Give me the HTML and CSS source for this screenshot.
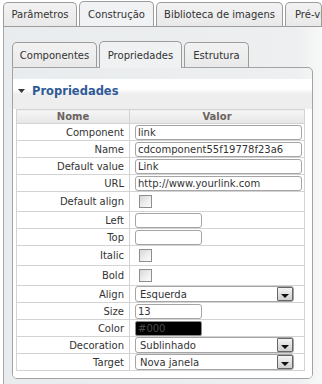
FILE: index.html
```html
<!DOCTYPE html>
<html lang="pt">
<head>
<meta charset="utf-8">
<title>Propriedades</title>
<link rel="stylesheet" href="styles.css">
</head>
<body>
<div class="outer-tabs">
  <div class="tab w-param">Parâmetros</div>
  <div class="tab active w-constr">Construção</div>
  <div class="tab w-biblio">Biblioteca de imagens</div>
  <div class="tab w-pre">Pré-visualização</div>
</div>
<div class="outer-panel">
  <div class="inner-tabs">
    <div class="tab itab w-comp">Componentes</div>
    <div class="tab itab active w-prop">Propriedades</div>
    <div class="tab itab w-estr">Estrutura</div>
  </div>
  <div class="inner-panel">
    <div class="box">
      <div class="box-head">
        <svg class="caret" width="7" height="4" viewBox="0 0 7 4"><polygon points="0,0 7,0 3.5,4" fill="#3a3a3a"/></svg>
        <span class="box-title">Propriedades</span>
      </div>
      <table class="props">
        <colgroup><col class="c1"><col class="c2"></colgroup>
        <thead>
          <tr class="hrow"><th>Nome</th><th>Valor</th></tr>
        </thead>
        <tbody>
          <tr class="r"><td class="lbl">Component</td><td class="val"><input class="txt" type="text" value="link"></td></tr>
          <tr class="r"><td class="lbl">Name</td><td class="val"><input class="txt" type="text" value="cdcomponent55f19778f23a6"></td></tr>
          <tr class="r"><td class="lbl">Default value</td><td class="val"><input class="txt" type="text" value="Link"></td></tr>
          <tr class="r"><td class="lbl">URL</td><td class="val"><input class="txt" type="text" value="http://www.yourlink.com"></td></tr>
          <tr class="rc"><td class="lbl">Default align</td><td class="val"><span class="chk"></span></td></tr>
          <tr class="r"><td class="lbl">Left</td><td class="val"><input class="txt short" type="text" value=""></td></tr>
          <tr class="r"><td class="lbl">Top</td><td class="val"><input class="txt short" type="text" value=""></td></tr>
          <tr class="rc"><td class="lbl">Italic</td><td class="val"><span class="chk"></span></td></tr>
          <tr class="rc"><td class="lbl">Bold</td><td class="val"><span class="chk"></span></td></tr>
          <tr class="r"><td class="lbl">Align</td><td class="val"><div class="sel"><span>Esquerda</span><span class="btn"><span class="tri"></span></span></div></td></tr>
          <tr class="r"><td class="lbl">Size</td><td class="val"><input class="txt short" type="text" value="13"></td></tr>
          <tr class="r"><td class="lbl">Color</td><td class="val"><div class="color">#000</div></td></tr>
          <tr class="r"><td class="lbl">Decoration</td><td class="val"><div class="sel"><span>Sublinhado</span><span class="btn"><span class="tri"></span></span></div></td></tr>
          <tr class="r"><td class="lbl">Target</td><td class="val"><div class="sel"><span>Nova janela</span><span class="btn"><span class="tri"></span></span></div></td></tr>
        </tbody>
      </table>
    </div>
  </div>
</div>
</body>
</html>
```
FILE: styles.css
```css
html, body {
  margin: 0;
  padding: 0;
  width: 322px;
  height: 384px;
  overflow: hidden;
  background: #ffffff;
}
body {
  font-family: "DejaVu Sans", Verdana, sans-serif;
  font-size: 10px;
  color: #333333;
}
.outer-tabs {
  display: flex;
  align-items: flex-end;
  gap: 2px;
  height: 26px;
  padding-left: 3px;
  box-sizing: border-box;
  white-space: nowrap;
  overflow: hidden;
}
.tab {
  flex: none;
  height: 24px;
  box-sizing: border-box;
  border: 1px solid #9c9c9c;
  border-bottom: none;
  border-radius: 5px 5px 0 0;
  background: linear-gradient(#f2f2f2, #e9e9e9);
  display: flex;
  align-items: center;
  justify-content: center;
  overflow: hidden;
  color: #333333;
}
.tab.active {
  height: 26px;
  margin-bottom: -1px;
  background: #f1f2f3;
  position: relative;
  z-index: 1;
}
.w-param { width: 74px; }
.w-constr { width: 75px; }
.w-biblio { width: 127px; }
.w-pre { width: 37px; justify-content: flex-start; padding-left: 9px; }

.outer-panel {
  margin-left: 3px;
  border-left: 1px solid #a8a8a8;
  border-top: 1px solid #9c9c9c;
  padding: 14px 0 0 8px;
  height: 358px;
  box-sizing: border-box;
  background: linear-gradient(to right, #e9ecee 0%, #edeff0 92%, #f8f8f8 100%);
}
.inner-tabs {
  display: flex;
  align-items: flex-end;
  gap: 2px;
  height: 26px;
}
.itab { height: 25px; }
.itab.active { height: 27px; background: #eff1f2; }
.w-comp { width: 85px; }
.w-prop { width: 83px; }
.w-estr { width: 65px; }

.inner-panel {
  width: 301px;
  box-sizing: border-box;
  border: 1px solid #a3a3a3;
  border-radius: 0 5px 5px 5px;
  padding-top: 11px;
}
.box {
  background: #ffffff;
  border-radius: 0 0 4px 4px;
  padding-bottom: 7px;
}
.box-head {
  height: 30px;
  box-sizing: border-box;
  padding: 3px 0 0 5px;
  display: flex;
  align-items: flex-start;
  background: linear-gradient(to bottom, #ffffff 0px, #ffffff 10px, #eeeeee 15px, #eeeeee 100%);
}
.caret {
  margin-top: 7px;
  flex: none;
}
.box-title {
  margin-left: 7px;
  font-weight: bold;
  font-size: 11.5px;
  line-height: 18px;
  color: #2f5b97;
}
.props {
  width: 288px;
  margin-left: 3px;
  border-collapse: collapse;
  table-layout: fixed;
  border: 1px solid #d3d3d3;
}
.c1 { width: 113px; }
.c2 { width: 175px; }
.props th, .props td {
  border: 1px solid #d3d3d3;
  padding: 0;
}
.hrow { height: 14px; }
.hrow th {
  font-weight: bold;
  font-size: 10px;
  color: #6a6360;
  background: linear-gradient(#f5f5f5, #e6e6e6);
  line-height: 12px;
  text-align: center;
}
.r { height: 17px; }
.rc { height: 20px; }
.lbl {
  text-align: right;
  padding-right: 5px !important;
  white-space: nowrap;
}
.val {
  padding-left: 5px !important;
  vertical-align: middle;
}
.txt {
  display: block;
  width: 167px;
  height: 15px;
  box-sizing: border-box;
  margin: 0;
  border: 1px solid #a5a5a5;
  border-radius: 3px;
  padding: 0 2px;
  font: inherit;
  color: #333333;
  background: #ffffff;
  outline: none;
}
.txt.short { width: 67px; }
.chk {
  display: block;
  width: 13px;
  height: 13px;
  margin-left: 4px;
  box-sizing: border-box;
  border: 1px solid #8e8e8e;
  background: linear-gradient(135deg, #d6d6d6 0%, #f0f0f0 60%, #fbfbfb 100%);
}
.sel {
  width: 159px;
  height: 16px;
  box-sizing: border-box;
  border: 1px solid #a5a5a5;
  border-radius: 3px;
  display: flex;
  align-items: center;
  justify-content: space-between;
  padding-left: 4px;
  background: #ffffff;
}
.btn {
  flex: none;
  width: 16px;
  height: 14px;
  box-sizing: border-box;
  border: 1px solid #666666;
  border-radius: 1px;
  background: linear-gradient(#f4f4f4, #cfcfcf);
  display: flex;
  align-items: flex-end;
  justify-content: center;
  padding-bottom: 2px;
}
.tri {
  width: 0;
  height: 0;
  border-left: 4px solid transparent;
  border-right: 4px solid transparent;
  border-top: 4px solid #111111;
}
.color {
  width: 67px;
  height: 15px;
  box-sizing: border-box;
  background: #000000;
  border: 1px solid #8a8a8a;
  border-radius: 2px;
  color: #4a4a4a;
  padding-left: 2px;
  line-height: 13px;
}
```
